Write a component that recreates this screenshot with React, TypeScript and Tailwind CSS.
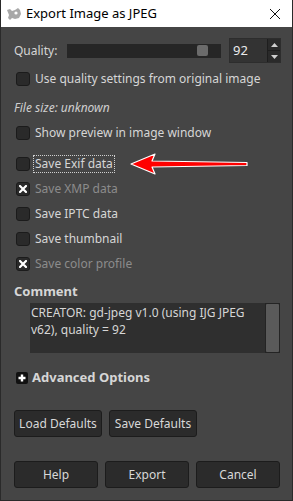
import React from 'react';

const font = { fontFamily: '"Noto Sans", "Open Sans", sans-serif' };

function Check({ checked = false }: { checked?: boolean }) {
  return (
    <span className="flex h-[14px] w-[14px] items-center justify-center rounded-[3px] border border-[#1b1b1b] bg-[#2a2a2a]">
      {checked && (
        <svg width="8" height="8" viewBox="0 0 8 8">
          <path d="M1 1 L7 7 M7 1 L1 7" stroke="#fff" strokeWidth="2.2" strokeLinecap="square" />
        </svg>
      )}
    </span>
  );
}

function Row({ label, checked, dim, focus }: { label: string; checked?: boolean; dim?: boolean; focus?: boolean }) {
  return (
    <div className="flex h-[25px] items-center gap-[4px] pl-[15px]">
      <Check checked={checked} />
      <span className={`px-[1px] leading-[16px] ${dim ? 'text-[#8c8c8c]' : 'text-[#d6d6d6]'} ${focus ? 'outline outline-1 outline-dotted outline-[#cfcfcf]' : ''}`}>{label}</span>
    </div>
  );
}

function Btn({ children, w }: { children: React.ReactNode; w: string }) {
  return (
    <button className={`${w} h-[27px] rounded-[3px] border border-[#1c1c1c] bg-[#2b2b2b] text-[12px] text-[#d8d8d8]`}>{children}</button>
  );
}

export default function App() {
  return (
    <div style={font} className="flex h-[501px] w-[293px] flex-col border border-t-0 border-[#2a2a2a] bg-[#454545] text-[12px]">
      {/* ─── title bar ─── */}
      <div className="flex h-[27px] items-center bg-white pl-[5px] text-[13px] text-black">
        <svg width="16" height="14" viewBox="0 0 16 14" className="mr-[4px]">
          <path d="M1 3 L4 2 L6 4 L9 3 L12 1 L14 3 L15 7 L13 11 L9 12 L6 11 L4 13 L2 11 L3 8 Z" fill="#a8a8a8" />
          <circle cx="10" cy="6" r="1.6" fill="#fff" />
        </svg>
        <span className="flex-1">Export Image as JPEG</span>
        <svg width="12" height="12" viewBox="0 0 12 12" className="mr-[11px]">
          <path d="M1 1 L11 11 M11 1 L1 11" stroke="#111" strokeWidth="1" />
        </svg>
      </div>

      {/* ─── quality ─── */}
      <div className="mt-[11px] flex h-[25px] items-center pl-[13px] text-[#d6d6d6]">
        <span className="w-[53px]">Quality:</span>
        <div className="flex h-[14px] w-[154px] items-center justify-end bg-[#262626] pr-[13px]">
          <div className="h-[11px] w-[11px] rounded-[2px] bg-[#6b6b6b]" />
        </div>
        <div className="ml-[8px] flex h-[25px] w-[52px] items-stretch border border-[#2d2d2d] bg-[#333333]">
          <span className="flex flex-1 items-center pl-[3px] text-[13px] text-[#ebebeb]">92</span>
          <div className="flex w-[13px] flex-col border-l border-[#1e1e1e] bg-[#2a2a2a]">
            <span className="flex flex-1 items-center justify-center">
              <svg width="7" height="4" viewBox="0 0 7 4"><path d="M0 4 L3.5 0 L7 4 Z" fill="#cfcfcf" /></svg>
            </span>
            <span className="flex flex-1 items-center justify-center border-t border-[#1e1e1e]">
              <svg width="7" height="4" viewBox="0 0 7 4"><path d="M0 0 L3.5 4 L7 0 Z" fill="#cfcfcf" /></svg>
            </span>
          </div>
        </div>
      </div>

      <div className="mt-[3px]">
        <Row label="Use quality settings from original image" />
      </div>

      <div className="mt-[4px] h-[25px] pl-[13px] italic leading-[25px] text-[#cfcfcf]">File size: unknown</div>

      <Row label="Show preview in image window" />
      <div className="h-[6px]" />
      <div className="relative">
        <Row label="Save Exif data" focus />
        <svg width="120" height="24" viewBox="0 0 120 24" className="absolute left-[128px] top-[1px]">
          <path d="M2 12 L26 2 L23 9 L118 10.5 L118 13.5 L23 15 L26 22 Z" fill="#ff0000" stroke="#ffffff" strokeWidth="1.2" strokeLinejoin="round" />
        </svg>
      </div>
      <Row label="Save XMP data" checked dim />
      <Row label="Save IPTC data" />
      <Row label="Save thumbnail" />
      <Row label="Save color profile" checked dim />

      {/* ─── comment ─── */}
      <div className="mt-[5px] h-[20px] pl-[13px] text-[13px] font-bold leading-[20px] text-[#d6d6d6]">Comment</div>
      <div className="ml-[29px] mr-[12px] mt-[2px] flex h-[50px] bg-[#2f2f2f]">
        <div className="flex-1 pl-[1px] pt-[1px] text-[12px] leading-[17px] text-[#d6d6d6]">
          CREATOR: gd-jpeg v1.0 (using IJG JPEG v62), quality = 92
        </div>
        <div className="w-[15px] bg-[#242424] p-[1px]">
          <div className="h-full rounded-[1px] bg-[#5a5a5a]" />
        </div>
      </div>

      {/* ─── advanced ─── */}
      <div className="mt-[16px] flex h-[18px] items-center gap-[4px] pl-[15px]">
        <span className="flex h-[12px] w-[12px] items-center justify-center rounded-[2px] bg-[#111]">
          <svg width="8" height="8" viewBox="0 0 8 8"><path d="M4 0.5 V7.5 M0.5 4 H7.5" stroke="#fff" strokeWidth="2.4" /></svg>
        </span>
        <span className="text-[13px] font-bold text-[#d6d6d6]">Advanced Options</span>
      </div>

      <div className="mt-[23px] flex gap-[7px] pl-[13px]">
        <Btn w="w-[88px]">Load Defaults</Btn>
        <Btn w="w-[88px]">Save Defaults</Btn>
      </div>

      <div className="mt-[24px] flex gap-[7px] pl-[13px]">
        <Btn w="w-[84px]">Help</Btn>
        <Btn w="w-[84px]">Export</Btn>
        <Btn w="w-[84px]">Cancel</Btn>
      </div>
    </div>
  );
}
